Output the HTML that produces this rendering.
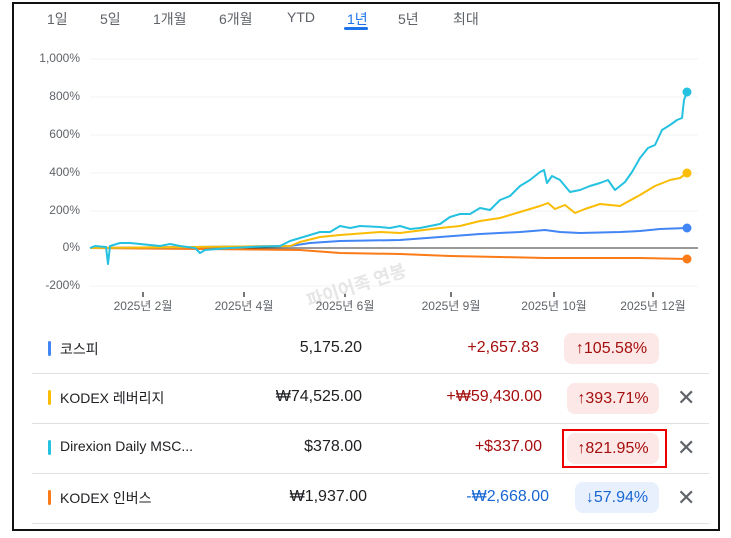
<!DOCTYPE html>
<html><head><meta charset="utf-8"><style>
*{margin:0;padding:0;box-sizing:border-box}
body{width:731px;height:538px;background:#fff;position:relative;overflow:hidden;font-family:"Liberation Sans","Noto Sans CJK KR",sans-serif;color:#202124}
.frame{position:absolute;left:12px;top:2px;width:708px;height:529px;border:2px solid #111}
.t{position:absolute;font-size:14px;color:#5f6368;top:9px}
.yl{position:absolute;right:651px;font-size:12px;color:#5f6368;text-align:right}
.xl{position:absolute;top:297px;font-size:12px;color:#5f6368;transform:translateX(-50%);white-space:nowrap}
.row{position:absolute;left:32px;width:677px;height:50px;border-bottom:1px solid #e0e0e0}
.bar{position:absolute;left:16px;width:3px;height:15px;border-radius:2px}
.nm{position:absolute;left:28px;font-size:14px;color:#202124}
.pr{position:absolute;right:347px;font-size:16px;color:#202124}
.ch{position:absolute;right:160px;font-size:16px}
.bd{position:absolute;right:50px;height:31px;border-radius:8px;font-size:16px;line-height:31px;text-align:center}
.x{position:absolute;left:645px;font-size:22px;color:#5f6368;line-height:20px}
</style></head><body>
<div class="frame"></div>
<div class="t" style="left:47px">1일</div>
<div class="t" style="left:100px">5일</div>
<div class="t" style="left:153px">1개월</div>
<div class="t" style="left:219px">6개월</div>
<div class="t" style="left:287px">YTD</div>
<div class="t" style="left:347px;color:#1a73e8">1년</div>
<div style="position:absolute;left:344px;top:27px;width:24px;height:3px;background:#1a73e8;border-radius:2px"></div>
<div class="t" style="left:398px">5년</div>
<div class="t" style="left:453px">최대</div>
<div class="yl" style="top:51px">1,000%</div>
<div class="yl" style="top:89px">800%</div>
<div class="yl" style="top:127px">600%</div>
<div class="yl" style="top:165px">400%</div>
<div class="yl" style="top:203px">200%</div>
<div class="yl" style="top:240px">0%</div>
<div class="yl" style="top:278px">-200%</div>
<svg style="position:absolute;left:0;top:0" width="731" height="320">
<g stroke="#f1f3f4" stroke-width="1"><line x1="90" y1="59" x2="698" y2="59"/><line x1="90" y1="97" x2="698" y2="97"/><line x1="90" y1="135" x2="698" y2="135"/><line x1="90" y1="173" x2="698" y2="173"/><line x1="90" y1="211" x2="698" y2="211"/><line x1="90" y1="286" x2="698" y2="286"/></g>
<line x1="90" y1="248" x2="698" y2="248" stroke="#333" stroke-width="1"/>
<g stroke="#777" stroke-width="2"><line x1="143" y1="292" x2="143" y2="297"/><line x1="244" y1="292" x2="244" y2="297"/><line x1="345" y1="292" x2="345" y2="297"/><line x1="451" y1="292" x2="451" y2="297"/><line x1="554" y1="292" x2="554" y2="297"/><line x1="653" y1="292" x2="653" y2="297"/></g>
<text x="300" y="290" transform="rotate(-18 360 270)" font-size="18" font-weight="bold" fill="#e6e6e6" font-family="Noto Sans CJK KR,sans-serif">파이어족 연봉</text>
<g fill="none" stroke-width="2" stroke-linejoin="round">
<polyline stroke="#fa7b17" points="90,248 200,249 300,250 340,253 400,254 450,256 500,257 545,258 600,258 640,258 687,259"/>
<polyline stroke="#4285f4" points="90,248 290,246 310,243 340,241 400,240 440,237 480,234 520,232 545,230 560,232 580,233 620,232 640,231 660,229 687,228"/>
<polyline stroke="#fbbc04" points="90,248 290,246 300,242 320,237 340,235 380,232 400,233 440,228 460,226 480,221 500,218 520,212 540,206 548,203 555,209 565,205 575,213 585,209 600,204 620,206 640,195 655,186 670,180 680,178 687,173"/>
<polyline stroke="#24c1e0" points="90,248 95,246 106,247 108,264 110,246 120,243 130,243 160,246 170,244 180,246 195,248 200,253 205,250 230,248 250,247 280,246 290,241 300,238 320,232 330,232 340,226 350,228 360,226 380,227 390,228 400,226 410,229 420,228 440,224 450,217 460,214 470,214 480,208 490,210 500,200 510,196 520,186 530,180 540,172 544,170 547,183 552,176 560,180 570,192 580,190 590,186 600,183 608,180 615,190 625,182 632,172 640,158 648,148 655,145 662,130 670,125 677,120 682,118 684,100 687,92"/>
</g>
<circle cx="687" cy="92" r="4.5" fill="#24c1e0"/><circle cx="687" cy="173" r="4.5" fill="#fbbc04"/><circle cx="687" cy="228" r="4.5" fill="#4285f4"/><circle cx="687" cy="259" r="4.5" fill="#fa7b17"/>
</svg>
<div class="xl" style="left:143px">2025년 2월</div>
<div class="xl" style="left:244px">2025년 4월</div>
<div class="xl" style="left:345px">2025년 6월</div>
<div class="xl" style="left:451px">2025년 9월</div>
<div class="xl" style="left:554px">2025년 10월</div>
<div class="xl" style="left:653px">2025년 12월</div>

<div class="row" style="top:324px">
<div class="bar" style="top:17px;background:#4285f4"></div><div class="nm" style="top:15px">코스피</div>
<div class="pr" style="top:15px">5,175.20</div><div class="ch" style="top:15px;color:#a50e0e;right:170px">+2,657.83</div>
<div class="bd" style="top:9px;width:95px;right:50px;background:#fce8e6;color:#a50e0e">↑105.58%</div></div>
<div class="row" style="top:374px">
<div class="bar" style="top:16px;background:#fbbc04"></div><div class="nm" style="top:14px">KODEX 레버리지</div>
<div class="pr" style="top:14px">₩74,525.00</div><div class="ch" style="top:14px;color:#a50e0e;right:167px">+₩59,430.00</div>
<div class="bd" style="top:9px;width:92px;background:#fce8e6;color:#a50e0e">↑393.71%</div><div class="x" style="top:14px">✕</div></div>
<div class="row" style="top:424px">
<div class="bar" style="top:16px;background:#24c1e0"></div><div class="nm" style="top:14px">Direxion Daily MSC...</div>
<div class="pr" style="top:14px">$378.00</div><div class="ch" style="top:14px;color:#a50e0e;right:167px">+$337.00</div>
<div class="bd" style="top:9px;width:92px;background:#fce8e6;color:#a50e0e">↑821.95%</div><div class="x" style="top:14px">✕</div>
<div style="position:absolute;left:530px;top:5px;width:105px;height:39px;border:2px solid #e00"></div></div>
<div class="row" style="top:474px">
<div class="bar" style="top:16px;background:#fa7b17"></div><div class="nm" style="top:14px">KODEX 인버스</div>
<div class="pr" style="top:14px;right:342px">₩1,937.00</div><div class="ch" style="top:14px;color:#1967d2;right:160px">-₩2,668.00</div>
<div class="bd" style="top:8px;width:84px;background:#e8f0fe;color:#1967d2">↓57.94%</div><div class="x" style="top:14px">✕</div></div>
</body></html>
